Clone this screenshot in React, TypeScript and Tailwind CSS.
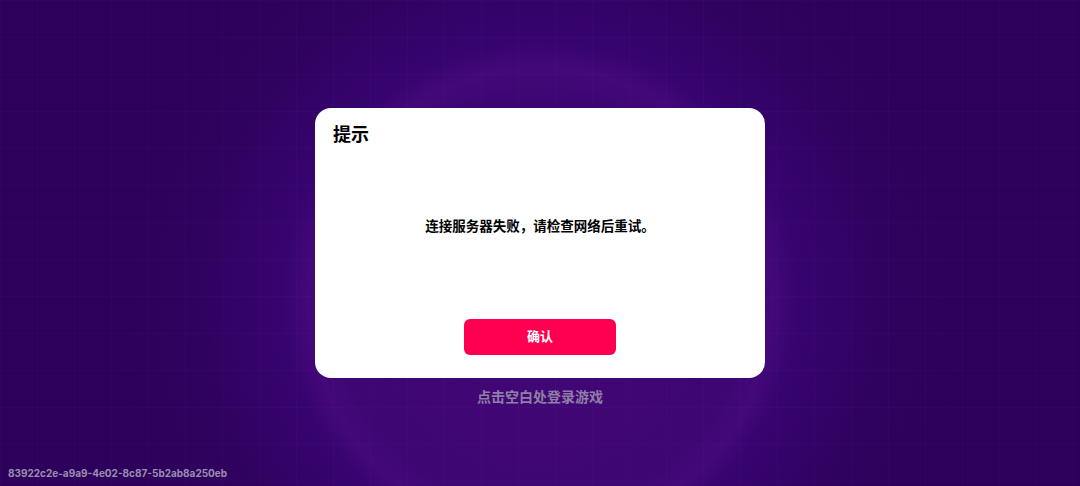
import React from 'react';

const font = "font-['Inter','Noto_Sans_CJK_SC',sans-serif]";

const App: React.FC = () => {
  return (
    <div
      className={`relative w-full h-[486px] overflow-hidden bg-[#2d005c] ${font}`}
    >
      {/* glow + soft rings */}
      <div className="absolute inset-0 bg-[radial-gradient(circle_at_540px_300px,#420776_0px,#3f0674_150px,#3d0673_205px,#440879_232px,#370470_255px,#30025f_340px,#2d005c_430px)]" />
      {/* faint grid */}
      <div className="absolute inset-0 opacity-40 bg-[linear-gradient(to_right,rgba(140,80,200,0.12)_1px,transparent_1px),linear-gradient(to_bottom,rgba(140,80,200,0.12)_1px,transparent_1px)] bg-[size:37px_37px]" />

      <div className="relative flex flex-col items-center pt-[108px]">
        <div className="w-[450px] h-[270px] bg-white rounded-[16px] flex flex-col">
          <div className="pl-[18px] pt-[15px] text-[18px] leading-[24px] font-bold text-black">
            提示
          </div>
          <div className="mt-[70px] text-center text-[13.5px] leading-[18px] font-bold text-black">
            连接服务器失败，请检查网络后重试。
          </div>
          <div className="mt-auto mb-[23px] flex justify-center">
            <button className="w-[152px] h-[36px] rounded-[6px] bg-[#ff0050] text-white text-[13px] font-bold">
              确认
            </button>
          </div>
        </div>
        <div className="mt-[9px] text-[14px] leading-[20px] font-bold text-[#8f7fa6]">
          点击空白处登录游戏
        </div>
      </div>

      <div className="absolute left-[8px] bottom-[6px] text-[10px] leading-[14px] font-bold text-[#9b8fb0]">
        83922c2e-a9a9-4e02-8c87-5b2ab8a250eb
      </div>
    </div>
  );
};

export default App;
